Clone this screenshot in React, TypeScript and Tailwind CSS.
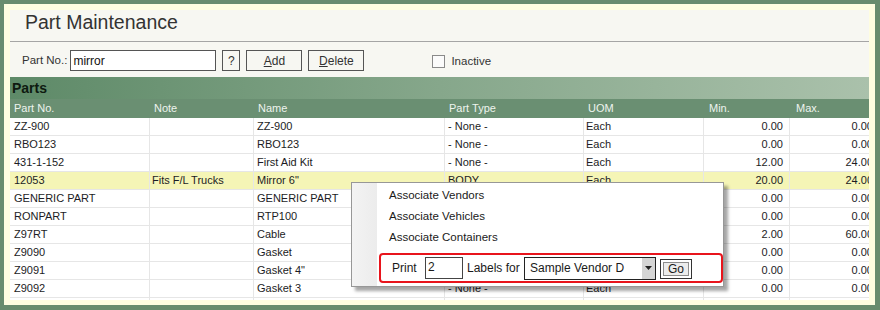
import React from "react";

type Row = { no: string; note: string; name: string; type: string; uom: string; min: string; max: string; hl?: boolean };

const rows: Row[] = [
  { no: "ZZ-900", note: "", name: "ZZ-900", type: "- None -", uom: "Each", min: "0.00", max: "0.00" },
  { no: "RBO123", note: "", name: "RBO123", type: "- None -", uom: "Each", min: "0.00", max: "0.00" },
  { no: "431-1-152", note: "", name: "First Aid Kit", type: "- None -", uom: "Each", min: "12.00", max: "24.00" },
  { no: "12053", note: "Fits F/L Trucks", name: 'Mirror 6"', type: "BODY", uom: "Each", min: "20.00", max: "24.00", hl: true },
  { no: "GENERIC PART", note: "", name: "GENERIC PART", type: "- None -", uom: "Each", min: "0.00", max: "0.00" },
  { no: "RONPART", note: "", name: "RTP100", type: "- None -", uom: "Each", min: "0.00", max: "0.00" },
  { no: "Z97RT", note: "", name: "Cable", type: "- None -", uom: "Each", min: "2.00", max: "60.00" },
  { no: "Z9090", note: "", name: "Gasket", type: "- None -", uom: "Each", min: "0.00", max: "0.00" },
  { no: "Z9091", note: "", name: 'Gasket 4"', type: "- None -", uom: "Each", min: "0.00", max: "0.00" },
  { no: "Z9092", note: "", name: "Gasket 3", type: "- None -", uom: "Each", min: "0.00", max: "0.00" },
  { no: "", note: "", name: "", type: "", uom: "", min: "", max: "" },
];

const cols = "grid grid-cols-[140px_104px_191px_139px_120px_86px_85px] w-[865px]";

export default function App() {
  return (
    <div className="relative w-[880px] h-[310px] bg-[#688c6e] pt-[4px] pl-[4px] pr-[5px] pb-[5px] font-['Liberation_Sans',Arial,sans-serif] text-[#1c1c24] overflow-hidden">
      <div className="w-full h-full bg-[#fefde0] pt-[6px] pl-[6px] pr-[6px] pb-[5px]">
        <div className="w-full h-full bg-[#f7f7f2] flex flex-col overflow-hidden">
          {/* Title */}
          <div className="h-[31px] flex items-center pl-[15px] pb-[5px] shrink-0">
            <span className="text-[19.5px] text-[#333] leading-none">Part Maintenance</span>
          </div>
          <div className="h-px bg-[#a5a5a5] shrink-0" />
          {/* Toolbar */}
          <div className="h-[35px] shrink-0 flex items-start pt-[8px] pl-[12px] text-[11.5px]">
            <div className="h-[21px] flex items-center text-[#333]">Part No.:</div>
            <div className="ml-[3px] w-[146px] h-[21px] border border-[#555] bg-white flex items-center pl-[2px] text-[12px] text-[#111]">mirror</div>
            <div className="ml-[6px] w-[18px] h-[21px] border border-[#555] flex items-center justify-center text-[12px] text-[#333]">?</div>
            <div className="ml-[6px] w-[56px] h-[21px] border border-[#555] flex items-center justify-center text-[12px] text-[#333]">
              <span><span className="underline">A</span>dd</span>
            </div>
            <div className="ml-[6px] w-[56px] h-[21px] border border-[#555] flex items-center justify-center text-[12px] text-[#333]">
              <span><span className="underline">D</span>elete</span>
            </div>
            <div className="ml-[68px] mt-[5px] w-[13px] h-[13px] border border-[#8a8a8a] bg-[#fbfbfb]" />
            <div className="ml-[6px] h-[21px] mt-[1px] flex items-center text-[#333]">Inactive</div>
          </div>
          {/* Parts band */}
          <div className="h-[22px] shrink-0 bg-linear-to-r from-[#5e8a68] via-[#86a78b] to-[#aac1ab] flex items-center pl-[2px]">
            <span className="text-[14px] font-bold text-[#0e1a10]">Parts</span>
          </div>
          {/* Header */}
          <div className={`${cols} h-[19px] shrink-0 bg-[#6a8f72] text-[11px] text-[#eef4ee] leading-[19px]`}>
            <div className="pl-[4px]">Part No.</div>
            <div className="pl-[4px]">Note</div>
            <div className="pl-[4px]">Name</div>
            <div className="pl-[4px]">Part Type</div>
            <div className="pl-[4px]">UOM</div>
            <div className="pl-[5px]">Min.</div>
            <div className="pl-[6px]">Max.</div>
          </div>
          {/* Rows */}
          <div className="flex flex-col">
            {rows.map((r, i) => (
              <div key={i} className={`${cols} h-[18px] shrink-0 text-[11px] leading-[17px] ${r.hl ? "bg-[#f5f5b6]" : "bg-white"}`}>
                <div className="pl-[4px] border-r border-b border-[#e6e6e6] whitespace-nowrap overflow-hidden">{r.no}</div>
                <div className="pl-[2px] border-r border-b border-[#e6e6e6] whitespace-nowrap overflow-hidden">{r.note}</div>
                <div className="pl-[3px] border-r border-b border-[#e6e6e6] whitespace-nowrap overflow-hidden">{r.name}</div>
                <div className="pl-[3px] border-r border-b border-[#e6e6e6] whitespace-nowrap overflow-hidden">{r.type}</div>
                <div className="pl-[2px] border-r border-b border-[#e6e6e6] whitespace-nowrap overflow-hidden">{r.uom}</div>
                <div className="pr-[6px] text-right border-r border-b border-[#e6e6e6] whitespace-nowrap overflow-hidden">{r.min}</div>
                <div className="pr-[2px] text-right border-b border-[#e6e6e6] whitespace-nowrap">{r.max}</div>
              </div>
            ))}
          </div>
        </div>
      </div>

      {/* Context menu */}
      <div className="absolute left-[351px] top-[182px] w-[373px] h-[105px] bg-white border border-[#979797] shadow-[4px_4px_3px_rgba(0,0,0,0.35)] flex">
        <div className="w-[25px] h-full bg-linear-to-r from-[#f3f3f3] to-[#ececec] shrink-0" />
        <div className="flex-1 flex flex-col pt-[2px] text-[11.5px] text-[#1a1a1a]">
          <div className="h-[21px] flex items-center pl-[12px]">Associate Vendors</div>
          <div className="h-[21px] flex items-center pl-[12px]">Associate Vehicles</div>
          <div className="h-[21px] flex items-center pl-[12px]">Associate Containers</div>
          <div className="mt-[5px] ml-[2px] w-[344px] h-[30px] border-2 border-[#e8141c] rounded-[4px] flex items-center pl-[11px]">
            <span className="w-[33px] text-[12px]">Print</span>
            <div className="w-[38px] h-[22px] border border-[#444] bg-white text-[12px] pl-[2px] leading-[18px]">2</div>
            <span className="ml-[4px] w-[57px] text-[12px]">Labels for</span>
            <div className="w-[132px] h-[23px] border border-[#222] bg-white flex items-center">
              <span className="flex-1 pl-[5px] text-[12px]">Sample Vendor D</span>
              <div className="w-[13px] h-full bg-[#d5d5d5] flex items-center justify-center">
                <svg width="7" height="4" viewBox="0 0 7 4"><path d="M0 0h7L3.5 4z" fill="#222" /></svg>
              </div>
            </div>
            <div className="ml-[4px] w-[32px] h-[20px] border border-[#333] p-[2px] mt-[2px]">
              <div className="w-full h-full border border-[#8c8c8c] bg-[#ececec] flex items-center justify-center text-[12px] leading-none">Go</div>
            </div>
          </div>
        </div>
      </div>
    </div>
  );
}
